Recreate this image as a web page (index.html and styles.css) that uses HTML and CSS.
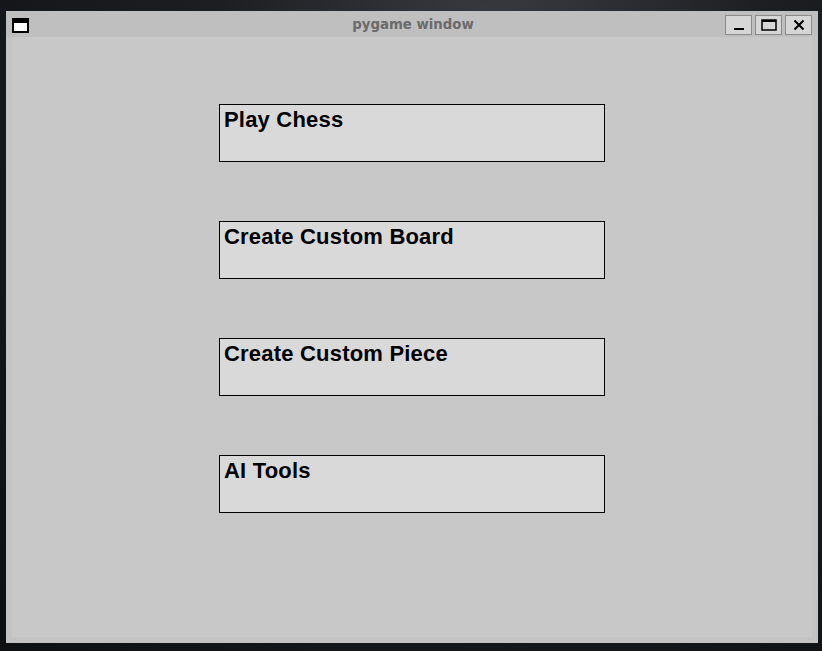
FILE: index.html
```html
<!DOCTYPE html>
<html>
<head>
<meta charset="utf-8">
<title>pygame window</title>
<link rel="stylesheet" href="styles.css">
</head>
<body>
<div class="window">
  <div class="titlebar">
    <div class="app-icon"></div>
    <div class="title">pygame window</div>
    <div class="controls">
      <div class="ctl"><svg width="12" height="12" viewBox="0 0 12 12"><rect x="1" y="9" width="10" height="2" fill="#000"/></svg></div>
      <div class="ctl"><svg width="16" height="12" viewBox="0 0 16 12"><rect x="1" y="1" width="14" height="10" fill="none" stroke="#000" stroke-width="1.5"/><rect x="1" y="1" width="14" height="2" fill="#000"/></svg></div>
      <div class="ctl"><svg width="12" height="12" viewBox="0 0 12 12"><path d="M1.5 1.5 L10.5 10.5 M10.5 1.5 L1.5 10.5" stroke="#000" stroke-width="2"/></svg></div>
    </div>
  </div>
  <div class="content">
    <div class="menu">
      <div class="btn">Play Chess</div>
      <div class="btn">Create Custom Board</div>
      <div class="btn">Create Custom Piece</div>
      <div class="btn">AI Tools</div>
    </div>
  </div>
</div>
</body>
</html>
```
FILE: styles.css
```css
html, body {
  margin: 0;
  padding: 0;
}
body {
  width: 822px;
  height: 651px;
  overflow: hidden;
  background: radial-gradient(ellipse at 60% 10%, #3a3d42 0%, #1c1e22 40%, #0e0f11 100%);
}
.window {
  margin-left: 6px;
  margin-top: 11px;
  width: 812px;
  height: 632px;
  background: #c3c3c3;
  display: flex;
  flex-direction: column;
}
.titlebar {
  height: 26px;
  background: #bfbfbf;
  display: flex;
  align-items: flex-start;
  position: relative;
}
.app-icon {
  margin-left: 6px;
  margin-top: 7px;
  width: 13px;
  height: 8px;
  border: 2px solid #000;
  border-top-width: 5px;
  background: #fff;
}
.title {
  position: absolute;
  left: 0;
  right: 0;
  top: 6px;
  padding-left: 2px;
  text-align: center;
  font-family: "DejaVu Sans", sans-serif;
  font-weight: bold;
  font-size: 13.3px;
  color: #6a6a6a;
  pointer-events: none;
}
.controls {
  margin-left: auto;
  margin-right: 6px;
  margin-top: 4px;
  display: flex;
  gap: 3px;
}
.ctl {
  width: 25px;
  height: 18px;
  border: 1px solid #8a8a8a;
  background: #d6d6d6;
  display: flex;
  align-items: center;
  justify-content: center;
}
.content {
  margin: 0 6px;
  width: 800px;
  height: 600px;
  background: #c8c8c8;
}
.menu {
  padding-top: 67px;
  padding-left: 207px;
  display: flex;
  flex-direction: column;
  gap: 59px;
}
.btn {
  box-sizing: border-box;
  width: 386px;
  height: 58px;
  border: 1px solid #000;
  background: #d9d9d9;
  padding: 2px 4px;
  font-family: "Liberation Sans", Arial, sans-serif;
  font-weight: bold;
  font-size: 22px;
  line-height: 25px;
  letter-spacing: 0.2px;
  color: #000;
}
```
